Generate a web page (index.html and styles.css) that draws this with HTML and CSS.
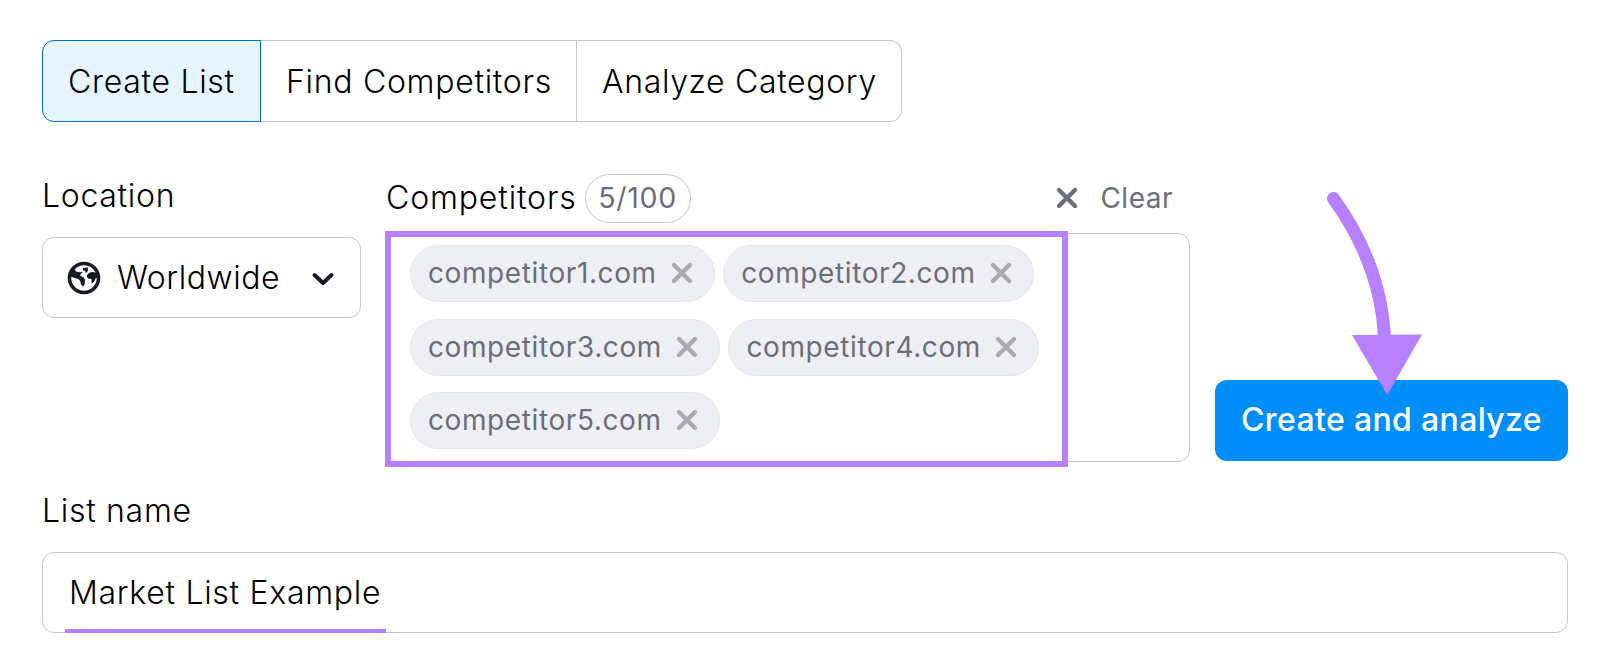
FILE: index.html
```html
<!DOCTYPE html>
<html lang="en">
<head>
    <meta charset="UTF-8">
    <meta name="viewport" content="width=device-width, initial-scale=1.0">
    <title>Create List</title>
    <link rel="stylesheet" href="styles.css">
</head>
<body>

    <div class="tabs">
        <div class="tab tab-create active">Create List</div>
        <div class="tab tab-find">Find Competitors</div>
        <div class="tab tab-analyze">Analyze Category</div>
    </div>

    <div class="form-row">
        <div class="location">
            <div class="label">Location</div>
            <div class="select">
                <svg class="globe" viewBox="0 0 32 32">
                    <circle cx="16" cy="16" r="14.5" fill="none" stroke="#171a22" stroke-width="3.6"/>
                    <path d="M2 14 L3 8 L6 6 L8 9.5 Q11 10.5 15 10 Q11.5 12.5 12.5 14 Q17 15 17 19 Q17 22.5 15.5 24.5 Q12.5 23 12.5 20 Q12 17.5 8.5 16.5 Q5 15.5 2 14 Z" fill="#171a22"/>
                    <path d="M15 6 L20 5.5 Q20.5 9 18.5 10.5 L17 11 Q18.5 9 15 8 Z" fill="#171a22"/>
                    <path d="M30 12 Q25 8.5 20.5 11.5 Q17.5 14 20 16.5 L23.5 17 L23.5 21.5 Q26.5 20.5 27.5 16.5 L30 15 Z" fill="#171a22"/>
                </svg>
                <span class="select-value">Worldwide</span>
                <svg class="chevron" viewBox="0 0 22 14">
                    <path d="M2.5 3 L11 11 L19.5 3" fill="none" stroke="#171a22" stroke-width="4" stroke-linecap="round" stroke-linejoin="round"/>
                </svg>
            </div>
        </div>

        <div class="competitors">
            <div class="competitors-header">
                <span class="label">Competitors</span>
                <span class="counter">5/100</span>
                <div class="clear">
                    <svg class="cross" viewBox="0 0 22 22"><path d="M3 3 L19 19 M19 3 L3 19"/></svg>
                    <span>Clear</span>
                </div>
            </div>
            <div class="tag-field">
                <div class="highlight"></div>
                <div class="tag-row">
                    <div class="tag">competitor1.com<svg class="cross" viewBox="0 0 22 22"><path d="M3 3 L19 19 M19 3 L3 19"/></svg></div>
                    <div class="tag">competitor2.com<svg class="cross" viewBox="0 0 22 22"><path d="M3 3 L19 19 M19 3 L3 19"/></svg></div>
                </div>
                <div class="tag-row">
                    <div class="tag">competitor3.com<svg class="cross" viewBox="0 0 22 22"><path d="M3 3 L19 19 M19 3 L3 19"/></svg></div>
                    <div class="tag">competitor4.com<svg class="cross" viewBox="0 0 22 22"><path d="M3 3 L19 19 M19 3 L3 19"/></svg></div>
                </div>
                <div class="tag-row">
                    <div class="tag">competitor5.com<svg class="cross" viewBox="0 0 22 22"><path d="M3 3 L19 19 M19 3 L3 19"/></svg></div>
                </div>
            </div>
        </div>

        <div class="submit">
            <div class="button">Create and analyze</div>
            <svg class="arrow" viewBox="0 0 100 210">
                <path d="M13.5 8.5 Q62 76 64.5 150" fill="none" stroke="#b680ff" stroke-width="13" stroke-linecap="round"/>
                <path d="M32 145 L102 144.5 L67.3 205 Z" fill="#b680ff"/>
            </svg>
        </div>
    </div>

    <div class="label list-label">List name</div>
    <div class="input">
        <span>Market List Example</span>
        <div class="underline"></div>
    </div>

</body>
</html>
```
FILE: styles.css
```css
* {
    box-sizing: border-box;
}

body {
    font-family: Inter, "Liberation Sans", sans-serif;
    font-size: 32px;
    font-weight: 300;
    line-height: 40px;
    letter-spacing: 0.7px;
    color: #000;
    background-color: #fff;
    margin: 0;
    padding: 40px 32px 0 42px;
    white-space: nowrap;
}

svg {
    display: block;
    flex: none;
    overflow: visible;
}

.tabs {
    display: flex;
    width: 860px;
    height: 82px;
}

.tab {
    display: flex;
    align-items: center;
    padding: 1px 0 0 25px;
    border: 1px solid #c4c7cf;
    border-left: none;
}

.tab-create {
    width: 219px;
    border-radius: 12px 0 0 12px;
}

.tab-find {
    width: 316px;
}

.tab-analyze {
    width: 325px;
    border-radius: 0 12px 12px 0;
    letter-spacing: 0.65px;
}

.tab.active {
    background-color: #e5f4ff;
    border: 1px solid #0071cd;
}

.form-row {
    display: flex;
    height: 289px;
    margin-top: 50px;
}

.location {
    width: 319px;
    padding-top: 4px;
}

.select {
    display: flex;
    align-items: center;
    height: 81px;
    margin-top: 21px;
    padding: 0 26px 0 25px;
    border: 1px solid #c4c7cf;
    border-radius: 12px;
}

.globe {
    width: 32px;
    height: 32px;
}

.select-value {
    margin-left: 17px;
    letter-spacing: 0.55px;
}

.chevron {
    width: 22px;
    height: 14px;
    margin-left: auto;
    margin-top: 3px;
}

.competitors {
    width: 804px;
    margin-left: 25px;
}

.competitors-header {
    display: flex;
    align-items: center;
    height: 53px;
    padding: 0 17px 1px 0;
}

.competitors-header .label {
    letter-spacing: 0.85px;
}

.counter {
    height: 49px;
    width: 106px;
    margin-left: 8px;
    border: 1px solid #c4c7cf;
    border-radius: 25px;
    color: #6c6e79;
    font-size: 28.5px;
    font-weight: 400;
    line-height: 45px;
    text-align: center;
}

.clear {
    display: flex;
    align-items: center;
    gap: 22px;
    margin-left: auto;
    color: #6c6e79;
    font-size: 28px;
    font-weight: 400;
    letter-spacing: 0.5px;
}

.cross {
    width: 22px;
    height: 22px;
}

.cross path {
    fill: none;
    stroke: #6c6e79;
    stroke-width: 4.4;
    stroke-linecap: round;
}

.tag-field {
    position: relative;
    display: flex;
    flex-direction: column;
    gap: 16.6px;
    height: 229px;
    margin-top: 8px;
    padding: 11px 0 0 23px;
    border: 1px solid #c4c7cf;
    border-radius: 12px;
}

.tag-row {
    display: flex;
    gap: 8px;
}

.tag {
    display: flex;
    align-items: center;
    gap: 14px;
    height: 57px;
    padding: 0 21.5px 1px 17px;
    background-color: #edeff3;
    border: 1px solid #e4e6ec;
    border-radius: 29px;
    color: #6c6e79;
    font-size: 28px;
    font-weight: 400;
    letter-spacing: 0.6px;
}

.tag .cross path {
    stroke: #a9abb1;
}

.highlight {
    position: absolute;
    left: -2px;
    top: -3px;
    width: 683px;
    height: 236px;
    border: 6px solid #b680ff;
}

.submit {
    position: relative;
    display: flex;
    align-items: flex-end;
    margin-left: 25px;
}

.button {
    width: 353px;
    height: 81px;
    border-radius: 12px;
    background-color: #008ff8;
    color: #fff;
    font-weight: 500;
    line-height: 80px;
    letter-spacing: 0.35px;
    text-align: center;
}

.arrow {
    position: absolute;
    left: 105px;
    top: 18px;
    width: 100px;
    height: 210px;
}

.list-label {
    margin-top: 30px;
}

.input {
    position: relative;
    display: flex;
    align-items: center;
    height: 81px;
    margin-top: 21px;
    padding: 1px 0 0 26px;
    border: 1px solid #c4c7cf;
    border-radius: 12px;
}

.underline {
    position: absolute;
    left: 22px;
    bottom: -3px;
    width: 321px;
    height: 6px;
    background-color: #b680ff;
}
```
